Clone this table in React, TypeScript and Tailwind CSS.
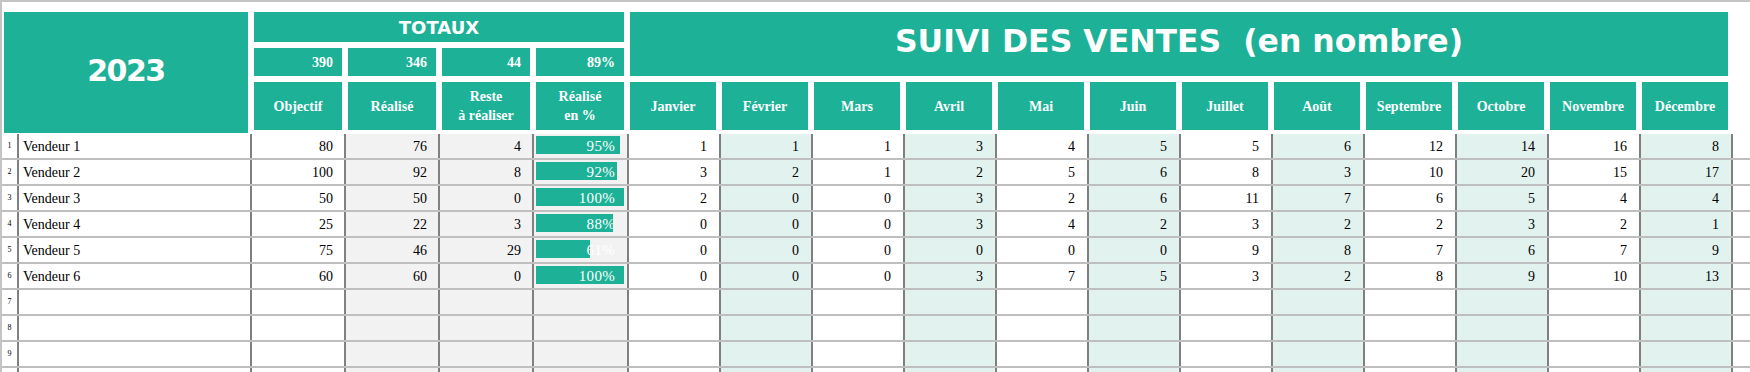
import React from "react";

type Row = {
  name: string;
  obj: number;
  real: number;
  reste: number;
  pct: number;
  months: number[];
};

const rows: Row[] = [
  { name: "Vendeur 1", obj: 80, real: 76, reste: 4, pct: 95, months: [1, 1, 1, 3, 4, 5, 5, 6, 12, 14, 16, 8] },
  { name: "Vendeur 2", obj: 100, real: 92, reste: 8, pct: 92, months: [3, 2, 1, 2, 5, 6, 8, 3, 10, 20, 15, 17] },
  { name: "Vendeur 3", obj: 50, real: 50, reste: 0, pct: 100, months: [2, 0, 0, 3, 2, 6, 11, 7, 6, 5, 4, 4] },
  { name: "Vendeur 4", obj: 25, real: 22, reste: 3, pct: 88, months: [0, 0, 0, 3, 4, 2, 3, 2, 2, 3, 2, 1] },
  { name: "Vendeur 5", obj: 75, real: 46, reste: 29, pct: 61, months: [0, 0, 0, 0, 0, 0, 9, 8, 7, 6, 7, 9] },
  { name: "Vendeur 6", obj: 60, real: 60, reste: 0, pct: 100, months: [0, 0, 0, 3, 7, 5, 3, 2, 8, 9, 10, 13] },
];

const monthNames = [
  "Janvier",
  "Février",
  "Mars",
  "Avril",
  "Mai",
  "Juin",
  "Juillet",
  "Août",
  "Septembre",
  "Octobre",
  "Novembre",
  "Décembre",
];

const totals = ["390", "346", "44", "89%"];

function HeaderBox({ children }: { children: React.ReactNode }) {
  return (
    <div className="w-[88px] h-[48px] bg-[#1db197] text-white font-bold text-[14px] leading-[19px] flex flex-col items-center justify-center text-center">
      {children}
    </div>
  );
}

function DataRow({ idx, row }: { idx: number; row?: Row }) {
  return (
    <div className="grid h-[26px] border-b-2 border-[#bfbfbf] grid-cols-[17px_233px_94px_94px_94px_95px_repeat(12,92px)] text-[14px]">
      <div className="border-r-2 border-[#808080] bg-white flex items-center justify-center text-[8px]">{idx < 10 ? idx : ""}</div>
      <div className="border-r-2 border-[#808080] bg-white flex items-center pl-[4px]">{row ? row.name : ""}</div>
      <div className="border-r-2 border-[#808080] bg-white flex items-center justify-end pr-[11px]">{row ? row.obj : ""}</div>
      <div className="border-r-2 border-[#808080] bg-[#f2f2f2] flex items-center justify-end pr-[11px]">{row ? row.real : ""}</div>
      <div className="border-r-2 border-[#808080] bg-[#f2f2f2] flex items-center justify-end pr-[11px]">{row ? row.reste : ""}</div>
      <div className="border-r-2 border-[#808080] bg-[#f2f2f2] grid">
        {row ? (
          <>
            <div className="col-start-1 row-start-1 self-start mt-[2px] ml-[2px] h-[18px] bg-[#1db197]" style={{ width: `${(row.pct / 100) * 88}px` }} />
            <div className="col-start-1 row-start-1 self-center justify-self-end pr-[12px] text-white text-[15px] tracking-[0.3px]">
              {row.pct}%
            </div>
          </>
        ) : null}
      </div>
      {monthNames.map((m, i) => (
        <div
          key={m}
          className={
            i % 2 === 1
              ? "border-r-2 border-[#808080] bg-[#e2f2ee] flex items-center justify-end pr-[12px]"
              : "border-r-2 border-[#808080] bg-white flex items-center justify-end pr-[12px]"
          }
        >
          {row ? row.months[i] : ""}
        </div>
      ))}
    </div>
  );
}

export default function App() {
  return (
    <div className="w-[1750px] h-[372px] overflow-hidden bg-white border-t-2 border-l-2 border-[#c4c4c4] font-['Liberation_Serif',serif] text-black">
      <div className="flex pl-[2px] pt-[10px] h-[132px]">
        <div className="w-[244px] h-[121px] bg-[#1db197] text-white flex items-center justify-center pb-[5px] font-['DejaVu_Sans',sans-serif] font-bold text-[30px] tracking-[-1.5px]">
          2023
        </div>
        <div className="ml-[6px] w-[370px] flex flex-col gap-[6px]">
          <div className="h-[30px] bg-[#1db197] text-white flex items-center justify-center font-['DejaVu_Sans',sans-serif] font-bold text-[18px]">
            TOTAUX
          </div>
          <div className="flex gap-[6px]">
            {totals.map((t) => (
              <div key={t} className="w-[88px] h-[28px] bg-[#1db197] text-white font-bold text-[14px] flex items-center justify-end pr-[9px]">
                {t}
              </div>
            ))}
          </div>
          <div className="flex gap-[6px]">
            <HeaderBox>Objectif</HeaderBox>
            <HeaderBox>Réalisé</HeaderBox>
            <HeaderBox>
              <span>Reste</span>
              <span>à réaliser</span>
            </HeaderBox>
            <HeaderBox>
              <span>Réalisé</span>
              <span>en %</span>
            </HeaderBox>
          </div>
        </div>
        <div className="ml-[6px] w-[1098px] flex flex-col gap-[6px]">
          <div className="h-[64px] bg-[#1db197] text-white flex items-center justify-center pb-[4px] font-['DejaVu_Sans',sans-serif] font-bold text-[31.5px] whitespace-pre">
            SUIVI DES VENTES  (en nombre)
          </div>
          <div className="flex gap-[6px]">
            {monthNames.map((m) => (
              <div key={m} className="w-[86px] h-[48px] bg-[#1db197] text-white font-bold text-[14px] flex items-center justify-center">
                {m}
              </div>
            ))}
          </div>
        </div>
      </div>
      <div>
        {Array.from({ length: 10 }).map((_, i) => (
          <DataRow key={i} idx={i + 1} row={rows[i]} />
        ))}
      </div>
    </div>
  );
}
